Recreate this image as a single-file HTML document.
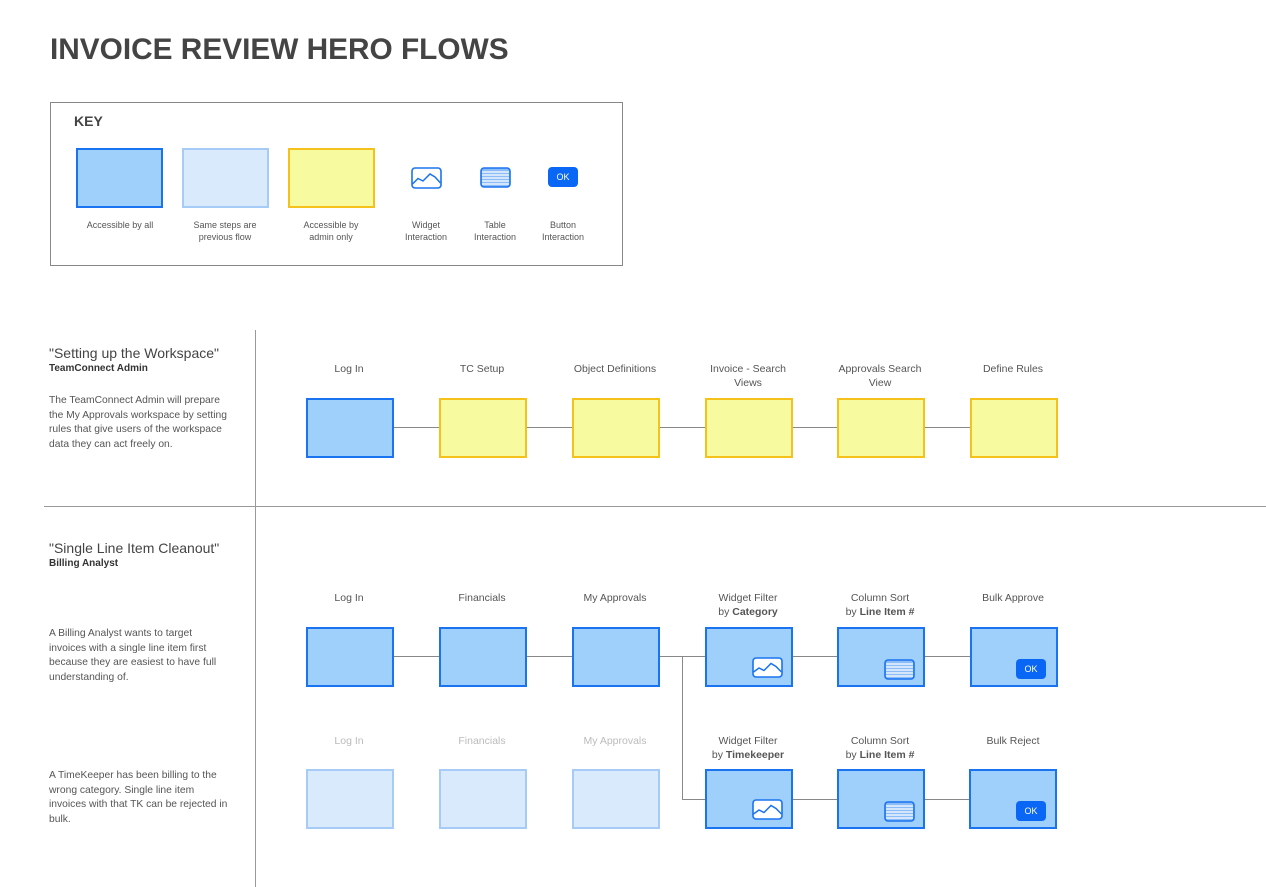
<!DOCTYPE html>
<html><head><meta charset="utf-8"><style>
body{margin:0;width:1266px;height:887px;background:#fff;position:relative;overflow:hidden;font-family:"Liberation Sans",sans-serif;color:#555}
.a{position:absolute}
.b{position:absolute;width:84px;height:56px;box-sizing:content-box}
.bl{background:#9fcffb;border:2px solid #1a73f0}
.ye{background:#f7fa9f;border:2px solid #f5c21b}
.lb{background:#d8eafb;border:2px solid #a6cbf7}
.h{position:absolute;height:2px;background:#888}
.lab{position:absolute;width:130px;text-align:center;font-size:10.5px;line-height:14px;color:#555}
.kl{position:absolute;width:100px;text-align:center;font-size:9px;line-height:12px;color:#555}
.ok{position:absolute;width:30px;height:20px;background:#0a66f5;border-radius:4px;color:#fff;font-size:9px;line-height:20px;text-align:center}
.desc{position:absolute;left:49px;width:182px;font-size:10.3px;line-height:14.5px;color:#555}
.tt{position:absolute;left:49px;font-size:14px;color:#444}
.st{position:absolute;left:49px;font-size:10px;font-weight:bold;color:#333}
</style></head><body>
<div class="a" style="left:50px;top:33px;font-size:29.8px;font-weight:bold;color:#444">INVOICE REVIEW HERO FLOWS</div>
<div class="a" style="left:50px;top:102px;width:571px;height:162px;border:1px solid #888"></div>
<div class="a" style="left:74px;top:113px;font-size:14px;font-weight:bold;color:#444">KEY</div>
<div class="b bl" style="left:76px;top:148px;width:83px;height:56px"></div>
<div class="b lb" style="left:182px;top:148px;width:83px;height:56px"></div>
<div class="b ye" style="left:288px;top:148px;width:83px;height:56px"></div>
<div class="kl" style="left:70px;top:219px">Accessible by all</div>
<div class="kl" style="left:175px;top:219px">Same steps are<br>previous flow</div>
<div class="kl" style="left:281px;top:219px">Accessible by<br>admin only</div>
<div class="kl" style="left:376px;top:219px">Widget<br>Interaction</div>
<div class="kl" style="left:445px;top:219px">Table<br>Interaction</div>
<div class="kl" style="left:513px;top:219px">Button<br>Interaction</div>
<svg class="a" style="left:411px;top:167px" width="31" height="22"><rect x="1" y="1" width="29" height="20" rx="3" fill="#fff" stroke="#1a73f0" stroke-width="1.6"/><polyline points="1.5,17 7,11.5 12,14 19,7 24,10 29.5,16" fill="none" stroke="#1a73f0" stroke-width="1.5"/></svg>
<svg class="a" style="left:480px;top:167px" width="31" height="21"><rect x="1" y="1" width="29" height="19" rx="3" fill="#8cbcf8" stroke="#1a73f0" stroke-width="1.6"/><g stroke="#fff" stroke-width="1.3"><line x1="2" y1="5" x2="29" y2="5"/><line x1="2" y1="8" x2="29" y2="8"/><line x1="2" y1="11" x2="29" y2="11"/><line x1="2" y1="14" x2="29" y2="14"/><line x1="2" y1="17" x2="29" y2="17"/></g></svg>
<div class="ok" style="left:548px;top:167px">OK</div>

<div class="a" style="left:255px;top:330px;width:1px;height:557px;background:#999"></div>
<div class="a" style="left:44px;top:506px;width:1222px;height:1px;background:#999"></div>

<div class="tt" style="top:345px">"Setting up the Workspace"</div>
<div class="st" style="top:363px">TeamConnect Admin</div>
<div class="desc" style="top:394px">The TeamConnect Admin will prepare the My Approvals workspace by setting rules that give users of the workspace data they can act freely on.</div>
<div class="tt" style="top:540px">"Single Line Item Cleanout"</div>
<div class="st" style="top:558px">Billing Analyst</div>
<div class="desc" style="top:627px">A Billing Analyst wants to target invoices with a single line item first because they are easiest to have full understanding of.</div>
<div class="desc" style="top:769px">A TimeKeeper has been billing to the wrong category. Single line item invoices with that TK can be rejected in bulk.</div>

<div class="h" style="left:390px;top:427px;width:582px;height:1px"></div>
<div class="lab" style="left:284px;top:362px">Log In</div>
<div class="lab" style="left:417px;top:362px">TC Setup</div>
<div class="lab" style="left:550px;top:362px">Object Definitions</div>
<div class="lab" style="left:683px;top:362px">Invoice - Search<br>Views</div>
<div class="lab" style="left:815px;top:362px">Approvals Search<br>View</div>
<div class="lab" style="left:948px;top:362px">Define Rules</div>
<div class="b bl" style="left:306px;top:398px"></div>
<div class="b ye" style="left:439px;top:398px"></div>
<div class="b ye" style="left:572px;top:398px"></div>
<div class="b ye" style="left:705px;top:398px"></div>
<div class="b ye" style="left:837px;top:398px"></div>
<div class="b ye" style="left:970px;top:398px"></div>

<div class="h" style="left:390px;top:656px;width:582px;height:1px"></div>
<div class="a" style="left:682px;top:656px;width:1px;height:144px;background:#888"></div>
<div class="h" style="left:682px;top:799px;width:290px;height:1px"></div>
<div class="lab" style="left:284px;top:591px">Log In</div>
<div class="lab" style="left:417px;top:591px">Financials</div>
<div class="lab" style="left:550px;top:591px">My Approvals</div>
<div class="lab" style="left:683px;top:591px">Widget Filter<br>by <b>Category</b></div>
<div class="lab" style="left:815px;top:591px">Column Sort<br>by <b>Line Item #</b></div>
<div class="lab" style="left:948px;top:591px">Bulk Approve</div>
<div class="b bl" style="left:306px;top:627px"></div>
<div class="b bl" style="left:439px;top:627px"></div>
<div class="b bl" style="left:572px;top:627px"></div>
<div class="b bl" style="left:705px;top:627px"></div>
<div class="b bl" style="left:837px;top:627px"></div>
<div class="b bl" style="left:970px;top:627px"></div>
<svg class="a" style="left:752px;top:657px" width="31" height="21"><rect x="1" y="1" width="29" height="19" rx="3" fill="#fff" stroke="#1a73f0" stroke-width="1.6"/><polyline points="1.5,15 7,11 12,13.5 19,6.5 24,9.5 29.5,15" fill="none" stroke="#1a73f0" stroke-width="1.5"/></svg>
<svg class="a" style="left:884px;top:659px" width="31" height="21"><rect x="1" y="1" width="29" height="19" rx="3" fill="#8cbcf8" stroke="#1a73f0" stroke-width="1.6"/><g stroke="#fff" stroke-width="1.3"><line x1="2" y1="5" x2="29" y2="5"/><line x1="2" y1="8" x2="29" y2="8"/><line x1="2" y1="11" x2="29" y2="11"/><line x1="2" y1="14" x2="29" y2="14"/><line x1="2" y1="17" x2="29" y2="17"/></g></svg>
<div class="ok" style="left:1016px;top:659px">OK</div>

<div class="lab" style="left:284px;top:734px;color:#bbb">Log In</div>
<div class="lab" style="left:417px;top:734px;color:#bbb">Financials</div>
<div class="lab" style="left:550px;top:734px;color:#bbb">My Approvals</div>
<div class="lab" style="left:683px;top:734px">Widget Filter<br>by <b>Timekeeper</b></div>
<div class="lab" style="left:815px;top:734px">Column Sort<br>by <b>Line Item #</b></div>
<div class="lab" style="left:948px;top:734px">Bulk Reject</div>
<div class="b lb" style="left:306px;top:769px"></div>
<div class="b lb" style="left:439px;top:769px"></div>
<div class="b lb" style="left:572px;top:769px"></div>
<div class="b bl" style="left:705px;top:769px"></div>
<div class="b bl" style="left:837px;top:769px"></div>
<div class="b bl" style="left:969px;top:769px"></div>
<svg class="a" style="left:752px;top:799px" width="31" height="21"><rect x="1" y="1" width="29" height="19" rx="3" fill="#fff" stroke="#1a73f0" stroke-width="1.6"/><polyline points="1.5,15 7,11 12,13.5 19,6.5 24,9.5 29.5,15" fill="none" stroke="#1a73f0" stroke-width="1.5"/></svg>
<svg class="a" style="left:884px;top:801px" width="31" height="21"><rect x="1" y="1" width="29" height="19" rx="3" fill="#8cbcf8" stroke="#1a73f0" stroke-width="1.6"/><g stroke="#fff" stroke-width="1.3"><line x1="2" y1="5" x2="29" y2="5"/><line x1="2" y1="8" x2="29" y2="8"/><line x1="2" y1="11" x2="29" y2="11"/><line x1="2" y1="14" x2="29" y2="14"/><line x1="2" y1="17" x2="29" y2="17"/></g></svg>
<div class="ok" style="left:1016px;top:801px">OK</div>
</body></html>
